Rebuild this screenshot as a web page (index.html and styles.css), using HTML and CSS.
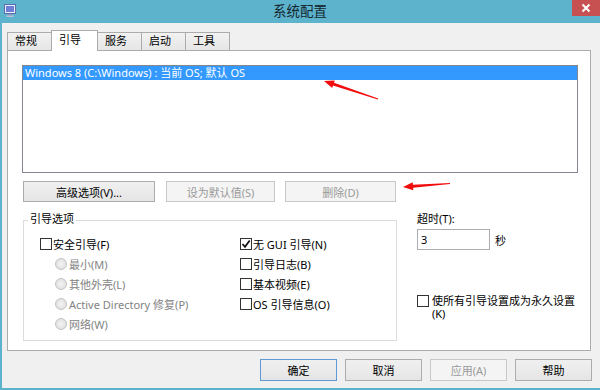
FILE: index.html
```html
<!DOCTYPE html>
<html lang="zh-CN">
<head>
    <meta charset="UTF-8">
    <title>系统配置</title>
    <link rel="stylesheet" href="styles.css">
</head>
<body>
    <div class="window">
        <!-- Title bar -->
        <div class="titlebar">
            <svg class="app-icon" width="12" height="13" viewBox="0 0 12 13">
                <rect x="0.5" y="0.5" width="11" height="9" fill="#e9eef8" stroke="#5a6fb0"></rect>
                <rect x="2" y="2" width="8" height="6" fill="#6f7fd8"></rect>
                <rect x="4" y="10" width="4" height="1.5" fill="#8a93b8"></rect>
                <rect x="2.5" y="11.5" width="7" height="1.5" fill="#b9bfd8"></rect>
            </svg>
            <div class="title">系统配置</div>
            <div class="close">
                <svg width="28" height="16" viewBox="0 0 28 16">
                    <path d="M10.5 4.5 L17.5 11.5 M17.5 4.5 L10.5 11.5" stroke="#fff" stroke-width="2" fill="none"></path>
                </svg>
            </div>
        </div>

        <div class="client">
            <!-- Tabs -->
            <div class="tabs">
                <div class="tab">常规</div>
                <div class="tab active">引导</div>
                <div class="tab">服务</div>
                <div class="tab">启动</div>
                <div class="tab">工具</div>
            </div>

            <div class="panel">
                <div class="listbox">
                    <div class="list-item">Windows 8 (C:\Windows) : 当前 OS; 默认 OS</div>
                </div>

                <div class="button-row">
                    <button class="btn btn-adv">高级选项(V)...</button>
                    <button class="btn btn-setdefault" disabled>设为默认值(S)</button>
                    <button class="btn btn-delete" disabled>删除(D)</button>
                </div>

                <div class="lower">
                    <!-- Boot options -->
                    <div class="group">
                        <span class="group-title">引导选项</span>
                        <div class="group-cols">
                            <div class="col col-left">
                                <div class="opt"><span class="check"></span>安全引导(F)</div>
                                <div class="opt sub disabled"><span class="radio"></span>最小(M)</div>
                                <div class="opt sub disabled"><span class="radio"></span>其他外壳(L)</div>
                                <div class="opt sub disabled"><span class="radio"></span>Active Directory 修复(P)</div>
                                <div class="opt sub disabled"><span class="radio"></span>网络(W)</div>
                            </div>
                            <div class="col">
                                <div class="opt">
                                    <span class="check">
                                        <svg width="10" height="10" viewBox="0 0 10 10">
                                            <path d="M1.5 5 L4 7.8 L8.7 1.5" stroke="#111" stroke-width="1.7" fill="none"></path>
                                        </svg>
                                    </span>无 GUI 引导(N)
                                </div>
                                <div class="opt"><span class="check"></span>引导日志(B)</div>
                                <div class="opt"><span class="check"></span>基本视频(E)</div>
                                <div class="opt"><span class="check"></span>OS 引导信息(O)</div>
                            </div>
                        </div>
                    </div>

                    <!-- Timeout -->
                    <div class="side">
                        <div class="timeout-label">超时(T):</div>
                        <div class="timeout-row">
                            <div class="input">3</div>
                            <span class="unit">秒</span>
                        </div>
                        <div class="perm">
                            <span class="check"></span>
                            <span class="perm-text">使所有引导设置成为永久设置 (K)</span>
                        </div>
                    </div>
                </div>
            </div>

            <!-- Dialog buttons -->
            <div class="footer">
                <button class="btn btn-default">确定</button>
                <button class="btn">取消</button>
                <button class="btn" disabled>应用(A)</button>
                <button class="btn">帮助</button>
            </div>
        </div>

        <!-- Red annotation arrows -->
        <svg class="arrows" width="600" height="390" viewBox="0 0 600 390">
            <polygon points="324,81 334.8,80.4 334,82.8 378.2,98.5 377.8,99.5 333,85.6 332.2,88" fill="#f20d0d"></polygon>
            <polygon points="403,187 412.7,182.3 412.9,184.8 450,183 450,184 413.1,187.8 413.3,190.3" fill="#f20d0d"></polygon>
        </svg>
    </div>
</body>
</html>
```

FILE: styles.css
```css
/* General */
* {
    box-sizing: border-box;
}

body {
    margin: 0;
    font-family: "Noto Sans", "Noto Sans CJK SC", sans-serif;
    font-size: 11px;
    color: #000;
    background: #fff;
}

.window {
    position: relative;
    width: 600px;
    height: 390px;
    background: #5db3cc;
    display: flex;
    flex-direction: column;
}

/* Title bar */
.titlebar {
    height: 23px;
    display: grid;
    grid-template-columns: 1fr auto 1fr;
    align-items: start;
}

.app-icon {
    margin: 4px 0 0 4px;
}

.title {
    font-size: 13.5px;
    line-height: 23px;
    color: #14262e;
}

.close {
    justify-self: end;
    width: 28px;
    height: 16px;
    background: #c75050;
}

.close svg {
    display: block;
}

/* Client area */
.client {
    flex: 1;
    background: #f0f0f0;
    margin: 0 0 2px 2px;
    padding: 7px 8px 0 5px;
}

/* Tabs */
.tabs {
    display: flex;
    align-items: flex-end;
    height: 20px;
}

.tab {
    height: 18px;
    line-height: 16px;
    padding: 0 14px 0 7px;
    border: 1px solid #acacac;
    border-bottom: none;
    background: linear-gradient(#f2f2f2, #e6e6e6);
    margin-right: -1px;
}

.tab.active {
    height: 21px;
    margin-bottom: -1px;
    padding: 1px 16px 0 7px;
    background: #fff;
    position: relative;
    z-index: 1;
}

.panel {
    width: 584px;
    height: 301px;
    border: 1px solid #acacac;
    background: #fff;
    padding: 14px;
}

/* List */
.listbox {
    width: 556px;
    height: 108px;
    border: 1px solid #828790;
}

.list-item {
    height: 14px;
    line-height: 14px;
    padding-left: 2px;
    background: #3399ff;
    color: #fff;
}

/* Buttons */
.btn {
    height: 21px;
    padding: 0;
    font: inherit;
    color: #000;
    border: 1px solid #acacac;
    background: linear-gradient(#f0f0f0, #e5e5e5);
}

.btn:disabled {
    color: #9a9a9a;
    border-color: #c8c8c8;
    background: #f4f4f4;
}

.button-row {
    display: flex;
    margin: 8px 0 0 1px;
}

.btn-adv {
    width: 132px;
}

.btn-setdefault {
    width: 109px;
    margin-left: 11px;
}

.btn-delete {
    width: 111px;
    margin-left: 10px;
}

/* Boot options */
.lower {
    display: flex;
    margin-top: 9px;
}

.group {
    flex: none;
    width: 374px;
    height: 121px;
    margin: 9px 0 0 1px;
    border: 1px solid #dcdcdc;
    padding-left: 16px;
}

.group-title {
    display: block;
    width: fit-content;
    line-height: 16px;
    margin: -10px 0 0 -12px;
    padding: 0 2px;
    background: #fff;
}

.group-cols {
    display: flex;
    margin-top: 7px;
}

.col {
    flex: 1;
}

.col-left {
    flex: none;
    width: 200px;
}

.opt {
    display: flex;
    align-items: center;
    height: 20px;
    white-space: nowrap;
}

.opt.sub {
    margin-left: 15px;
}

.disabled {
    color: #838383;
}

.check {
    flex: none;
    width: 12px;
    height: 12px;
    margin-right: 1px;
    border: 1px solid #333;
    background: #fff;
    display: flex;
    align-items: center;
    justify-content: center;
}

.radio {
    flex: none;
    width: 12px;
    height: 12px;
    margin-right: 2px;
    border: 1px solid #c3c3c3;
    border-radius: 50%;
    background: radial-gradient(#f4f4f4, #dadada);
}

/* Timeout side */
.side {
    flex: 1;
    margin-left: 20px;
}

.timeout-label {
    line-height: 16px;
}

.timeout-row {
    display: flex;
    align-items: center;
    margin-top: 2px;
}

.input {
    width: 73px;
    height: 21px;
    line-height: 19px;
    padding-left: 3px;
    border: 1px solid #abadb3;
    background: #fff;
}

.unit {
    margin-left: 5px;
}

.perm {
    display: flex;
    align-items: flex-start;
    margin-top: 44px;
}

.perm .check {
    margin-top: 1px;
    margin-right: 3px;
}

.perm-text {
    line-height: 13px;
}

/* Footer */
.footer {
    display: flex;
    justify-content: flex-end;
    gap: 8px;
    margin-top: 8px;
}

.footer .btn {
    width: 77px;
    height: 22px;
}

.btn-default {
    border-color: #5d9ad6;
}

/* Annotation */
.arrows {
    position: absolute;
    top: 0;
    left: 0;
    pointer-events: none;
}
```
